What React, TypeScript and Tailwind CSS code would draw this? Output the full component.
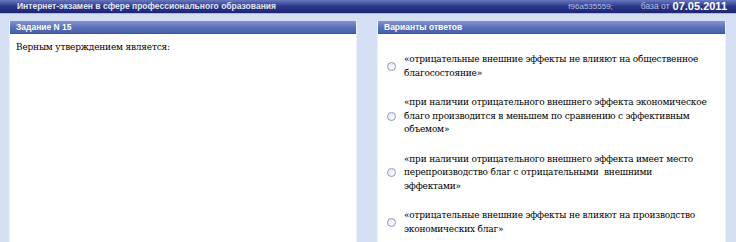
import React from "react"

// lines are broken where the original breaks them
const answers = [
  ["«отрицательные внешние эффекты не влияют на общественное", "благосостояние»"],
  [
    "«при наличии отрицательного внешнего эффекта экономическое",
    "благо производится в меньшем по сравнению с эффективным",
    "объемом»",
  ],
  [
    "«при наличии отрицательного внешнего эффекта имеет место",
    "перепроизводство благ с отрицательными  внешними",
    "эффектами»",
  ],
  ["«отрицательные внешние эффекты не влияют на производство", "экономических благ»"],
]

const serif = "[font-family:'DejaVu_Serif',serif] text-[9px] tracking-[-0.2px]"

function PanelHeader({ title }: { title: string }) {
  return (
    <div className="h-[13px] bg-gradient-to-b from-[#8596cf] via-[#5c72b8] to-[#4860a6] border-b border-[#3e5497] pl-[6px] flex items-center">
      <span className="text-[8.5px] font-bold text-white leading-none font-['Liberation_Sans',sans-serif]">
        {title}
      </span>
    </div>
  )
}

function Radio() {
  return (
    <span className="w-[9px] h-[9px] rounded-full border border-[#8a97bb] bg-gradient-to-br from-[#e3e8f2] to-white shrink-0" />
  )
}

export default function App() {
  return (
    <div className="w-[736px] h-[242px] bg-[#d5dff4] overflow-hidden flex flex-col">
      <div className="h-[14px] shrink-0 bg-gradient-to-b from-[#6a78c0] via-[#2b378b] to-[#1c2670] border-b border-[#aeb8e0] flex items-center justify-between pl-[17px] pr-[9px] font-['Liberation_Sans',sans-serif] text-[8.5px] font-bold leading-none">
        <span className="text-[#e4e8f6]">Интернет-экзамен в сфере профессионального образования</span>
        <div className="flex items-center">
          <span className="text-[#b9c2e4] font-normal text-[8px]">f96a535559;</span>
          <span className="ml-[28px] text-[#b9c2e4] font-normal">база от</span>
          <span className="ml-[3px] text-white text-[11px]">07.05.2011</span>
        </div>
      </div>

      <div className="flex-1 flex gap-[20px] pl-[9px] pt-[7px]">
        <div className="w-[348px] flex flex-col border-l border-r border-[#eef2fb]">
          <PanelHeader title="Задание N 15" />
          <div className={"flex-1 bg-white pl-[6px] pt-[6px] leading-[14px] text-black " + serif}>
            Верным утверждением является:
          </div>
        </div>

        <div className="w-[349px] flex flex-col border-l border-r border-[#eef2fb]">
          <PanelHeader title="Варианты ответов" />
          <div className="flex-1 bg-white pt-[19px] pl-[9px] flex flex-col gap-[16px]">
            {answers.map((lines, i) => (
              <div key={i} className="flex items-center gap-[8px]">
                <Radio />
                <div className={"leading-[13.5px] text-black whitespace-pre " + serif}>
                  {lines.map((l, j) => (
                    <div key={j}>{l}</div>
                  ))}
                </div>
              </div>
            ))}
          </div>
        </div>
      </div>
    </div>
  )
}
